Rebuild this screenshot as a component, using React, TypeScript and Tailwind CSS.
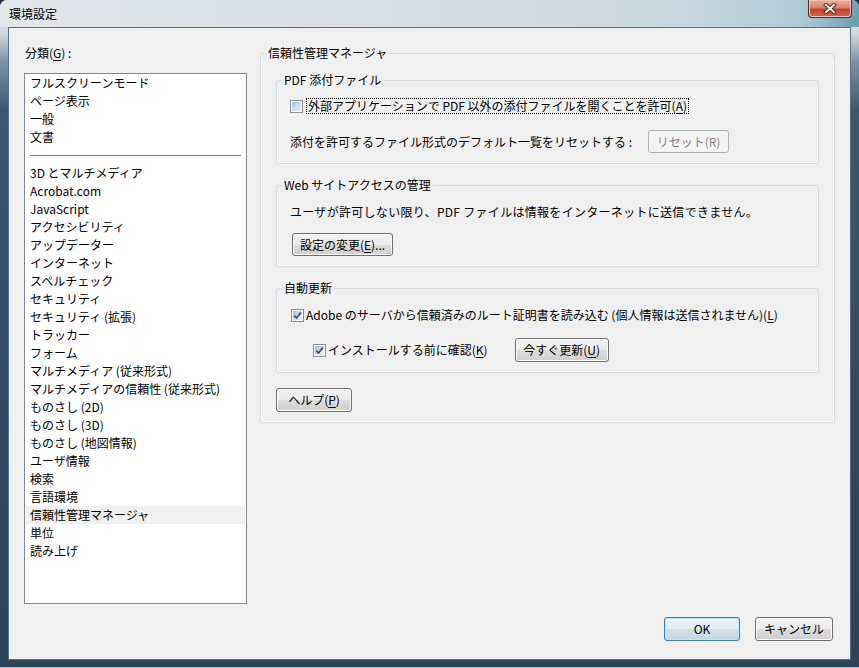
import React from 'react';

const categories = [
  '3D とマルチメディア',
  'Acrobat.com',
  'JavaScript',
  'アクセシビリティ',
  'アップデーター',
  'インターネット',
  'スペルチェック',
  'セキュリティ',
  'セキュリティ (拡張)',
  'トラッカー',
  'フォーム',
  'マルチメディア (従来形式)',
  'マルチメディアの信頼性 (従来形式)',
  'ものさし (2D)',
  'ものさし (3D)',
  'ものさし (地図情報)',
  'ユーザ情報',
  '検索',
  '言語環境',
  '信頼性管理マネージャ',
  '単位',
  '読み上げ',
];

const topCategories = ['フルスクリーンモード', 'ページ表示', '一般', '文書'];

const Group = ({ title, children }: { title: string; children: React.ReactNode }) => (
  <div className="flex flex-col">
    <div className="flex h-[16px]">
      <div className="w-[6px] mt-[8px] border-l border-t border-[#d5dfe5] rounded-tl-[3px]" />
      <span className="px-[2px] leading-[16px] whitespace-nowrap">{title}</span>
      <div className="flex-1 mt-[8px] border-t border-r border-[#d5dfe5] rounded-tr-[3px]" />
    </div>
    <div className="border-l border-r border-b border-[#d5dfe5] rounded-b-[3px] shadow-[inset_1px_0_0_#fff,inset_-1px_0_0_#fff,inset_0_-1px_0_#fff]">
      {children}
    </div>
  </div>
);

const Button = ({
  children,
  className = '',
  kind = 'normal',
}: {
  children: React.ReactNode;
  className?: string;
  kind?: 'normal' | 'default' | 'disabled';
}) => {
  const look =
    kind === 'default'
      ? 'border-[#3c7fb1] bg-[linear-gradient(#eef3f7_0%,#e4ecf2_50%,#d3e0ea_50%,#c4d6e4_100%)] shadow-[inset_0_0_0_1px_#bfe4f6]'
      : kind === 'disabled'
      ? 'border-[#adb2b5] bg-[#f4f4f4] text-[#838383]'
      : 'border-[#707070] bg-[linear-gradient(#f2f2f2_0%,#ebebeb_50%,#dddddd_50%,#cfcfcf_100%)] shadow-[inset_0_0_0_1px_#fcfcfc]';
  return (
    <div
      className={`flex items-center justify-center rounded-[3px] border whitespace-nowrap leading-[16px] ${look} ${className}`}
    >
      {children}
    </div>
  );
};

const CheckBox = ({ checked }: { checked?: boolean }) => (
  <span className="flex w-[13px] h-[13px] shrink-0 border border-[#8e8f8f] bg-white p-[1px]">
    <span className="flex flex-1 items-center justify-center bg-[linear-gradient(135deg,#a3bad3_0%,#cfdcea_50%,#eef3f8_100%)]">
      {checked && (
        <svg width="9" height="9" viewBox="0 0 9 9">
          <path d="M1.2 4.6 L3.5 7 L7.8 1.6" fill="none" stroke="#2f4a80" strokeWidth="1.7" />
        </svg>
      )}
    </span>
  </span>
);

const U = ({ children }: { children: React.ReactNode }) => <span className="underline underline-offset-2">{children}</span>;

export default function App() {
  return (
    <div className="w-[859px] h-[668px] overflow-hidden bg-[#1d2b38] font-['Noto_Sans_CJK_JP','Meiryo_UI',sans-serif] text-[12px] leading-[16px] text-black">
      <div className="relative flex h-full flex-col rounded-t-[7px] bg-[linear-gradient(180deg,#dfe4e8_0px,#cfd8df_34px,#7d92a5_62px,#3f576f_110px,#34495f_60%,#2f4459_100%)] border-b border-[#7fc6dc]">
        {/* title bar */}
        <div className="flex h-[27px] items-center pl-[9px] rounded-t-[7px] bg-[linear-gradient(90deg,#e2e6ea_0%,#d7dee4_45%,#cdd9e1_75%,#b3cbd7_93%,#6e9cb0_100%)]">
          <span className="leading-[16px]">環境設定</span>
        </div>
        <div className="absolute top-0 right-[7px] flex h-[18px] w-[44px] items-center justify-center rounded-b-[4px] border border-t-0 border-[#5a2a23] bg-[linear-gradient(#eab3a4_0%,#d9816c_45%,#c5452b_55%,#d5654a_100%)] shadow-[inset_0_0_0_1px_#f0c2b4]">
          <svg width="14" height="11" viewBox="0 0 14 11">
            <path d="M3 2 L11 9 M11 2 L3 9" stroke="#4a2119" strokeWidth="4" strokeLinecap="square" />
            <path d="M3 2 L11 9 M11 2 L3 9" stroke="#ffffff" strokeWidth="2" strokeLinecap="square" />
          </svg>
        </div>

        {/* client area */}
        <div className="mx-[8px] flex h-[633px] flex-col border border-[#5d6f80] bg-[#f0f0f0]">
          <div className="flex pl-[15px] pt-[17px]">
            {/* categories */}
            <div className="flex w-[223px] flex-col">
              <div className="h-[16px] pl-[1px]">
                分類(<U>G</U>) :
              </div>
              <div className="mt-[12px] h-[531px] border border-[#828790] bg-white">
                {topCategories.map((c) => (
                  <div key={c} className="mx-[1px] h-[18px] pl-[4px] leading-[18px] whitespace-nowrap">
                    {c}
                  </div>
                ))}
                <div className="flex h-[18px] items-center px-[5px]">
                  <div className="h-px flex-1 bg-[#4f8fcc]" />
                </div>
                {categories.map((c) => (
                  <div
                    key={c}
                    className={`mx-[1px] h-[18px] pl-[4px] leading-[18px] whitespace-nowrap ${
                      c === '信頼性管理マネージャ' ? 'bg-[#f0f0f0]' : ''
                    }`}
                  >
                    {c}
                  </div>
                ))}
              </div>
            </div>

            {/* trust manager */}
            <div className="ml-[13px] w-[575px]">
              <Group title="信頼性管理マネージャ">
                <div className="flex flex-col px-[15px] pt-[11px] pb-[10px]">
                  <Group title="PDF 添付ファイル">
                    <div className="flex flex-col pl-[13px] pt-[10px] pb-[10px]">
                      <div className="flex h-[16px] items-center">
                        <CheckBox />
                        <span className="ml-[3px] border border-dotted border-black px-[1px] leading-[14px] whitespace-nowrap">
                          外部アプリケーションで PDF 以外の添付ファイルを開くことを許可(<U>A</U>)
                        </span>
                      </div>
                      <div className="mt-[16px] flex h-[23px] items-center">
                        <span className="whitespace-nowrap">添付を許可するファイル形式のデフォルト一覧をリセットする :</span>
                        <Button kind="disabled" className="ml-[16px] h-[23px] w-[81px]">
                          リセット(R)
                        </Button>
                      </div>
                    </div>
                  </Group>

                  <div className="mt-[13px]">
                    <Group title="Web サイトアクセスの管理">
                      <div className="flex flex-col pl-[13px] pt-[11px] pb-[10px]">
                        <div className="h-[16px] whitespace-nowrap tracking-[0.3px]">
                          ユーザが許可しない限り、PDF ファイルは情報をインターネットに送信できません。
                        </div>
                        <Button className="ml-[2px] mt-[13px] h-[23px] w-[101px]">
                          設定の変更(<U>E</U>)...
                        </Button>
                      </div>
                    </Group>
                  </div>

                  <div className="mt-[13px]">
                    <Group title="自動更新">
                      <div className="flex flex-col pl-[14px] pt-[11px] pb-[10px]">
                        <div className="flex h-[16px] items-center">
                          <CheckBox checked />
                          <span className="ml-[2px] whitespace-nowrap">
                            Adobe のサーバから信頼済みのルート証明書を読み込む (個人情報は送信されません)(<U>L</U>)
                          </span>
                        </div>
                        <div className="mt-[15px] flex h-[24px] items-center pl-[22px]">
                          <CheckBox checked />
                          <span className="ml-[2px] whitespace-nowrap">
                            インストールする前に確認(<U>K</U>)
                          </span>
                          <Button className="ml-[27px] h-[24px] w-[94px]">
                            今すぐ更新(<U>U</U>)
                          </Button>
                        </div>
                      </div>
                    </Group>
                  </div>

                  <Button className="mt-[15px] h-[24px] w-[76px]">
                    ヘルプ(<U>P</U>)
                  </Button>
                </div>
              </Group>
            </div>
          </div>

          {/* dialog buttons */}
          <div className="mt-[13px] flex justify-end gap-[15px] pr-[17px]">
            <Button kind="default" className="h-[24px] w-[76px]">
              OK
            </Button>
            <Button className="h-[24px] w-[78px]">キャンセル</Button>
          </div>
        </div>
      </div>
    </div>
  );
}
